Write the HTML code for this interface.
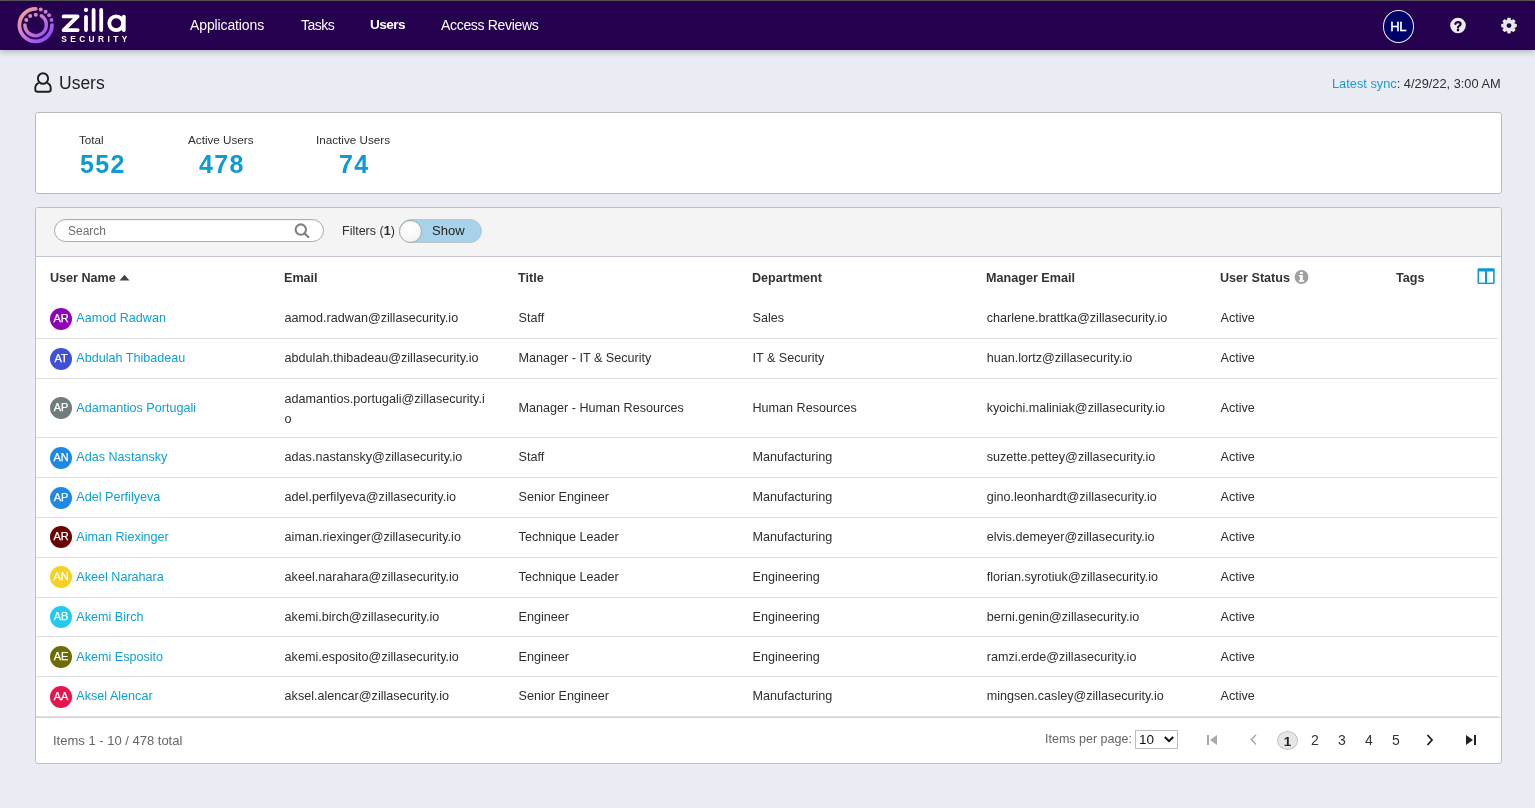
<!DOCTYPE html>
<html><head><meta charset="utf-8">
<style>
*{box-sizing:border-box;margin:0;padding:0}
html,body{width:1535px;height:808px;overflow:hidden}
body{will-change:transform;background:#E9ECF3;font-family:"Liberation Sans",sans-serif;color:#2E2E2E;position:relative}
.abs{position:absolute;white-space:nowrap}
#topline{position:absolute;left:0;top:0;width:1535px;height:1px;background:#5a5a5a}
#hdr{position:absolute;left:0;top:1px;width:1535px;height:49px;background:#25004F;box-shadow:0 2px 6px rgba(0,0,0,.24)}
.nav{position:absolute;top:17px;font-size:14px;line-height:16px;color:#fff}
.card{position:absolute;background:#fff;border:1px solid #BBBBBB;border-radius:3px}
.lbl{font-size:11.7px;line-height:14px;color:#2E2E2E}
.num{font-size:25px;line-height:28px;font-weight:bold;color:#0E9AD2;letter-spacing:1.4px}
.th{position:absolute;top:271px;font-size:12.6px;line-height:15px;font-weight:bold;color:#333}
.row{position:absolute;left:36px;width:1462px;border-bottom:1px solid #DEDEDE}
.c{position:absolute;font-size:12.6px;color:#2E2E2E;white-space:nowrap;margin-top:2px}
.nm{color:#0E9FD6}
.av{position:absolute;width:22px;height:22px;border-radius:50%;color:#fff;font-size:11px;font-weight:normal;text-align:center;line-height:21px;letter-spacing:-0.2px;-webkit-text-stroke:0.25px #fff}
</style></head>
<body>
<div id="topline"></div>
<div id="hdr"></div>

<!-- logo -->
<svg class="abs" style="left:0;top:0" width="140" height="50" viewBox="0 0 140 50">
  <defs>
    <linearGradient id="lg" gradientUnits="userSpaceOnUse" x1="21" y1="9" x2="50" y2="41">
      <stop offset="0" stop-color="#F8A58E"/>
      <stop offset="0.5" stop-color="#C67AD6"/>
      <stop offset="1" stop-color="#8B44FF"/>
    </linearGradient>
  </defs>
  <g fill="none" stroke="url(#lg)" stroke-linecap="round">
    <path d="M35.7 8.8 A16.3 16.3 0 1 0 52 25.1" stroke-width="3.8"/>
    <path d="M24.9 24.9 A10.7 10.7 0 1 0 41.27 15.83" stroke-width="3.5"/>
  </g>
  <g fill="url(#lg)">
    <circle cx="40.7" cy="9.4" r="2"/>
    <circle cx="45.6" cy="11.7" r="2"/>
    <circle cx="49.1" cy="15.3" r="2"/>
    <circle cx="51.5" cy="19.9" r="2"/>
    <circle cx="26.3" cy="19.9" r="2"/>
    <circle cx="30.2" cy="16.1" r="2"/>
    <circle cx="35.8" cy="14.7" r="2"/>
  </g>
  <g fill="none" stroke="#fff" stroke-width="3.8" stroke-linecap="round" stroke-linejoin="round">
    <path d="M63.6 16.4 H77.6 L63.6 30.1 H77.7"/>
    <path d="M86 16.9 V30.1"/>
    <path d="M93.6 9.9 V30.1"/>
    <path d="M101.2 9.9 V30.1"/>
    <circle cx="116.2" cy="23.3" r="6.9"/>
    <path d="M123.8 16.6 V30.1"/>
  </g>
  <circle cx="86" cy="9.9" r="2.1" fill="#fff"/>
  <text x="61.2" y="42" font-family="Liberation Sans" font-weight="bold" font-size="8.3" fill="#fff" letter-spacing="3.45">SECURITY</text>
</svg>

<div class="nav" style="left:190px;font-size:14px;letter-spacing:-0.12px">Applications</div>
<div class="nav" style="left:301px;font-size:14px;letter-spacing:-0.5px">Tasks</div>
<div class="nav" style="left:370px;font-weight:bold;font-size:13.6px;letter-spacing:-0.55px">Users</div>
<div class="nav" style="left:441px;font-size:14px;letter-spacing:-0.32px">Access Reviews</div>

<!-- header right -->
<div class="abs" style="left:1382.5px;top:10px;width:31.5px;height:33px;border-radius:50%;background:#00006A;border:1px solid #F0F0F0;color:#fff;font-weight:normal;-webkit-text-stroke:0.45px #fff;font-size:13px;line-height:31px;text-align:center;letter-spacing:-0.3px">HL</div>
<svg class="abs" style="left:1449px;top:17px" width="18" height="18" viewBox="0 0 18 18">
  <circle cx="9" cy="8.5" r="7.8" fill="#ECECEC"/>
  <path d="M6.4 6.9 C6.4 4.6 11.6 4.6 11.6 7 C11.6 8.8 9 8.8 9 10.6" fill="none" stroke="#25004F" stroke-width="2.2" stroke-linecap="round"/>
  <circle cx="9" cy="13.1" r="1.3" fill="#25004F"/>
</svg>
<svg class="abs" style="left:1500px;top:17px" width="18" height="18" viewBox="0 0 18 18">
  <g fill="#E8E8E8">
    <circle cx="9" cy="8.6" r="6.1"/>
    <g id="tooth"><rect x="7.2" y="0.8" width="3.6" height="3.6" rx="0.8"/></g>
    <use href="#tooth" transform="rotate(45 9 8.6)"/>
    <use href="#tooth" transform="rotate(90 9 8.6)"/>
    <use href="#tooth" transform="rotate(135 9 8.6)"/>
    <use href="#tooth" transform="rotate(180 9 8.6)"/>
    <use href="#tooth" transform="rotate(225 9 8.6)"/>
    <use href="#tooth" transform="rotate(270 9 8.6)"/>
    <use href="#tooth" transform="rotate(315 9 8.6)"/>
  </g>
  <circle cx="9" cy="8.6" r="2.4" fill="#25004F"/>
</svg>

<!-- page title -->
<svg class="abs" style="left:34px;top:72px" width="18" height="21" viewBox="0 0 18 21">
  <ellipse cx="9" cy="6.5" rx="5.1" ry="5.3" fill="none" stroke="#1E1E1E" stroke-width="1.9"/>
  <path d="M4.9 10.9 C2.3 11.9 1.3 13.8 1.3 16 V17.5 C1.3 18.9 2.3 19.8 3.6 19.8 H14.4 C15.7 19.8 16.7 18.9 16.7 17.5 V16 C16.7 13.8 15.7 11.9 13.1 10.9" fill="none" stroke="#1E1E1E" stroke-width="1.9" stroke-linejoin="round"/>
</svg>
<div class="abs" style="left:59px;top:73px;font-size:17.5px;line-height:20px;color:#1E1E1E">Users</div>
<div class="abs" style="left:1332px;top:76px;font-size:12.8px;line-height:15px;color:#2E2E2E"><span style="color:#1A9BD1">Latest sync</span>: 4/29/22, 3:00 AM</div>

<!-- stats card -->
<div class="card" style="left:35px;top:112px;width:1467px;height:82px"></div>
<div class="abs lbl" style="left:79px;top:133px">Total</div>
<div class="abs num" style="left:80px;top:150px">552</div>
<div class="abs lbl" style="left:188px;top:133px">Active Users</div>
<div class="abs num" style="left:199px;top:150px">478</div>
<div class="abs lbl" style="left:316px;top:133px">Inactive Users</div>
<div class="abs num" style="left:339px;top:150px">74</div>

<!-- table card -->
<div class="card" style="left:35px;top:207px;width:1467px;height:557px;overflow:hidden;border-color:#BAC0C9">
  <div style="position:absolute;left:0;top:0;width:100%;height:49px;background:#F4F4F4;border-bottom:1px solid #C0C6CF"></div>
</div>

<!-- toolbar -->
<div class="abs" style="left:54px;top:219px;width:270px;height:23px;border:1px solid #ABABAB;border-radius:12px;background:#fff;box-shadow:inset 0 1px 2px rgba(0,0,0,.06)"></div>
<div class="abs" style="left:68px;top:224px;font-size:12px;line-height:14px;color:#6F6F6F">Search</div>
<svg class="abs" style="left:293px;top:223px" width="17" height="16" viewBox="0 0 17 16">
  <circle cx="7.8" cy="6.6" r="5.2" fill="none" stroke="#808080" stroke-width="2.1"/>
  <path d="M11.6 10.5 L15.3 14" stroke="#808080" stroke-width="2.2" stroke-linecap="round"/>
</svg>
<div class="abs" style="left:342px;top:224px;font-size:12.5px;line-height:14px;color:#2E2E2E">Filters (<b>1</b>)</div>
<div class="abs" style="left:399px;top:219px;width:83px;height:24px;border-radius:12px;background:#A6D3EA;border:1px solid #B9C6CC"></div>
<div class="abs" style="left:399px;top:219.5px;width:23px;height:23px;border-radius:50%;background:radial-gradient(circle at 45% 35%,#FFFFFF 0,#F8F8F8 55%,#E6E6E6 100%);border:1px solid #A8A8A8"></div>
<div class="abs" style="left:432px;top:224px;font-size:13px;line-height:14px;color:#222">Show</div>

<!-- header row -->
<div class="th" style="left:50px">User Name</div>
<svg class="abs" style="left:119px;top:274px" width="11" height="7" viewBox="0 0 11 7"><path d="M0.5 6.5 L5.5 0.8 L10.5 6.5 Z" fill="#444"/></svg>
<div class="th" style="left:284px">Email</div>
<div class="th" style="left:518px">Title</div>
<div class="th" style="left:752px">Department</div>
<div class="th" style="left:986px">Manager Email</div>
<div class="th" style="left:1220px">User Status</div>
<svg class="abs" style="left:1294px;top:269px" width="16" height="16" viewBox="0 0 16 16">
  <circle cx="7.5" cy="8" r="6.9" fill="#A0A0A0"/>
  <rect x="5.9" y="3" width="2.9" height="2" rx="0.5" fill="#fff"/>
  <rect x="5.9" y="6" width="2.9" height="6.7" fill="#fff"/>
  <rect x="4.9" y="6" width="1.5" height="1.5" fill="#fff"/>
  <rect x="4.9" y="11.1" width="5.1" height="1.6" fill="#fff"/>
</svg>
<div class="th" style="left:1396px">Tags</div>
<svg class="abs" style="left:1477px;top:268px" width="18" height="17" viewBox="0 0 18 17">
  <rect x="0.5" y="0.3" width="17.2" height="15.8" rx="1.4" fill="#0E9BD3"/>
  <rect x="2.1" y="3.5" width="5.9" height="11.1" fill="#fff"/>
  <rect x="10" y="3.5" width="6.1" height="11.1" fill="#fff"/>
</svg>

<!-- rows -->
<div class="row" style="top:298px;height:41px"></div>
<div class="av" style="left:50px;top:308px;background:#8E03B5">AR</div>
<div class="c nm" style="left:76.3px;top:309px">Aamod Radwan</div>
<div class="c" style="left:284.6px;top:309px">aamod.radwan@zillasecurity.io</div>
<div class="c" style="left:518.6px;top:309px">Staff</div>
<div class="c" style="left:752.5px;top:309px">Sales</div>
<div class="c" style="left:986.7px;top:309px">charlene.brattka@zillasecurity.io</div>
<div class="c" style="left:1220.5px;top:309px">Active</div>
<div class="row" style="top:338px;height:41px"></div>
<div class="av" style="left:50px;top:348px;background:#3F50D6">AT</div>
<div class="c nm" style="left:76.3px;top:349px">Abdulah Thibadeau</div>
<div class="c" style="left:284.6px;top:349px">abdulah.thibadeau@zillasecurity.io</div>
<div class="c" style="left:518.6px;top:349px">Manager - IT &amp; Security</div>
<div class="c" style="left:752.5px;top:349px">IT &amp; Security</div>
<div class="c" style="left:986.7px;top:349px">huan.lortz@zillasecurity.io</div>
<div class="c" style="left:1220.5px;top:349px">Active</div>
<div class="row" style="top:378px;height:60px"></div>
<div class="av" style="left:50px;top:397px;background:#717C7C">AP</div>
<div class="c nm" style="left:76.3px;top:399px">Adamantios Portugali</div>
<div class="c" style="left:284.6px;top:388px;line-height:19.6px">adamantios.portugali@zillasecurity.i<br>o</div>
<div class="c" style="left:518.6px;top:399px">Manager - Human Resources</div>
<div class="c" style="left:752.5px;top:399px">Human Resources</div>
<div class="c" style="left:986.7px;top:399px">kyoichi.maliniak@zillasecurity.io</div>
<div class="c" style="left:1220.5px;top:399px">Active</div>
<div class="row" style="top:437px;height:41px"></div>
<div class="av" style="left:50px;top:447px;background:#1F88E3">AN</div>
<div class="c nm" style="left:76.3px;top:448px">Adas Nastansky</div>
<div class="c" style="left:284.6px;top:448px">adas.nastansky@zillasecurity.io</div>
<div class="c" style="left:518.6px;top:448px">Staff</div>
<div class="c" style="left:752.5px;top:448px">Manufacturing</div>
<div class="c" style="left:986.7px;top:448px">suzette.pettey@zillasecurity.io</div>
<div class="c" style="left:1220.5px;top:448px">Active</div>
<div class="row" style="top:477px;height:41px"></div>
<div class="av" style="left:50px;top:487px;background:#1F88E3">AP</div>
<div class="c nm" style="left:76.3px;top:488px">Adel Perfilyeva</div>
<div class="c" style="left:284.6px;top:488px">adel.perfilyeva@zillasecurity.io</div>
<div class="c" style="left:518.6px;top:488px">Senior Engineer</div>
<div class="c" style="left:752.5px;top:488px">Manufacturing</div>
<div class="c" style="left:986.7px;top:488px">gino.leonhardt@zillasecurity.io</div>
<div class="c" style="left:1220.5px;top:488px">Active</div>
<div class="row" style="top:517px;height:41px"></div>
<div class="av" style="left:50px;top:526px;background:#6B0303">AR</div>
<div class="c nm" style="left:76.3px;top:528px">Aiman Riexinger</div>
<div class="c" style="left:284.6px;top:528px">aiman.riexinger@zillasecurity.io</div>
<div class="c" style="left:518.6px;top:528px">Technique Leader</div>
<div class="c" style="left:752.5px;top:528px">Manufacturing</div>
<div class="c" style="left:986.7px;top:528px">elvis.demeyer@zillasecurity.io</div>
<div class="c" style="left:1220.5px;top:528px">Active</div>
<div class="row" style="top:557px;height:41px"></div>
<div class="av" style="left:50px;top:566px;background:#F7D024">AN</div>
<div class="c nm" style="left:76.3px;top:568px">Akeel Narahara</div>
<div class="c" style="left:284.6px;top:568px">akeel.narahara@zillasecurity.io</div>
<div class="c" style="left:518.6px;top:568px">Technique Leader</div>
<div class="c" style="left:752.5px;top:568px">Engineering</div>
<div class="c" style="left:986.7px;top:568px">florian.syrotiuk@zillasecurity.io</div>
<div class="c" style="left:1220.5px;top:568px">Active</div>
<div class="row" style="top:597px;height:40px"></div>
<div class="av" style="left:50px;top:606px;background:#22CBEE">AB</div>
<div class="c nm" style="left:76.3px;top:608px">Akemi Birch</div>
<div class="c" style="left:284.6px;top:608px">akemi.birch@zillasecurity.io</div>
<div class="c" style="left:518.6px;top:608px">Engineer</div>
<div class="c" style="left:752.5px;top:608px">Engineering</div>
<div class="c" style="left:986.7px;top:608px">berni.genin@zillasecurity.io</div>
<div class="c" style="left:1220.5px;top:608px">Active</div>
<div class="row" style="top:636px;height:41px"></div>
<div class="av" style="left:50px;top:646px;background:#6C6C05">AE</div>
<div class="c nm" style="left:76.3px;top:648px">Akemi Esposito</div>
<div class="c" style="left:284.6px;top:648px">akemi.esposito@zillasecurity.io</div>
<div class="c" style="left:518.6px;top:648px">Engineer</div>
<div class="c" style="left:752.5px;top:648px">Engineering</div>
<div class="c" style="left:986.7px;top:648px">ramzi.erde@zillasecurity.io</div>
<div class="c" style="left:1220.5px;top:648px">Active</div>
<div class="row" style="top:676px;height:41px"></div>
<div class="av" style="left:50px;top:686px;background:#E61550">AA</div>
<div class="c nm" style="left:76.3px;top:687px">Aksel Alencar</div>
<div class="c" style="left:284.6px;top:687px">aksel.alencar@zillasecurity.io</div>
<div class="c" style="left:518.6px;top:687px">Senior Engineer</div>
<div class="c" style="left:752.5px;top:687px">Manufacturing</div>
<div class="c" style="left:986.7px;top:687px">mingsen.casley@zillasecurity.io</div>
<div class="c" style="left:1220.5px;top:687px">Active</div>
<div class="abs" style="left:36px;top:717px;width:1465px;height:1px;background:#D3D3D3"></div>
<!-- footer -->
<div class="abs" style="left:53px;top:733px;font-size:13px;line-height:15px;color:#666">Items 1 - 10 / 478 total</div>
<div class="abs" style="left:1045px;top:732px;font-size:12.5px;line-height:15px;color:#666">Items per page:</div>
<div class="abs" style="left:1135px;top:730px;width:43px;height:19px;border:1px solid #BDBDBD;background:#fff;font-size:13.5px;line-height:18px;padding-left:3px;color:#111">10</div>
<svg class="abs" style="left:1163px;top:734.5px" width="12" height="9" viewBox="0 0 12 9"><path d="M1.8 2 L6 6.2 L10.2 2" fill="none" stroke="#111" stroke-width="2"/></svg>
<svg class="abs" style="left:1204px;top:732px" width="16" height="16" viewBox="0 0 16 16"><rect x="3" y="3" width="2" height="10" fill="#AAA"/><path d="M13 3 L6 8 L13 13 Z" fill="#AAA"/></svg>
<svg class="abs" style="left:1246px;top:732px" width="14" height="16" viewBox="0 0 14 16"><path d="M9.6 3.2 L5.2 7.6 L9.6 12" fill="none" stroke="#ABABAB" stroke-width="1.5" stroke-linecap="round"/></svg>
<div class="abs" style="left:1277px;top:731px;width:21px;height:19px;border-radius:50%;background:#E6E6E6;border:1px solid #C2C2C2"></div>
<div class="abs" style="left:1277px;top:732px;width:21px;text-align:center;font-size:13.5px;line-height:20px;font-weight:bold;color:#222">1</div>
<div class="abs" style="left:1311px;top:732px;font-size:14px;line-height:16px;color:#333">2</div>
<div class="abs" style="left:1338px;top:732px;font-size:14px;line-height:16px;color:#333">3</div>
<div class="abs" style="left:1365px;top:732px;font-size:14px;line-height:16px;color:#333">4</div>
<div class="abs" style="left:1392px;top:732px;font-size:14px;line-height:16px;color:#333">5</div>
<svg class="abs" style="left:1423px;top:732px" width="14" height="16" viewBox="0 0 14 16"><path d="M4.5 3 L9 8 L4.5 13" fill="none" stroke="#222" stroke-width="1.8"/></svg>
<svg class="abs" style="left:1463px;top:732px" width="16" height="16" viewBox="0 0 16 16"><path d="M3 3 L10 8 L3 13 Z" fill="#222"/><rect x="11" y="3" width="2" height="10" fill="#222"/></svg>

</body></html>
